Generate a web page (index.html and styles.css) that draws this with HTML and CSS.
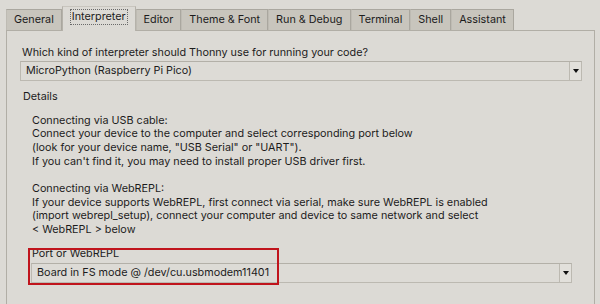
FILE: index.html
```html
<!DOCTYPE html>
<html lang="en">
<head>
    <meta charset="UTF-8">
    <title>Thonny options - Interpreter</title>
    <link rel="stylesheet" href="styles.css">
</head>
<body>
    <div class="tabs">
        <div class="tab">General</div>
        <div class="tab active"><span class="focus">Interpreter</span></div>
        <div class="tab">Editor</div>
        <div class="tab">Theme &amp; Font</div>
        <div class="tab">Run &amp; Debug</div>
        <div class="tab">Terminal</div>
        <div class="tab">Shell</div>
        <div class="tab">Assistant</div>
    </div>

    <div class="panel">
        <div class="question">Which kind of interpreter should Thonny use for running your code?</div>
        <div class="combo">
            <span class="combo-text">MicroPython (Raspberry Pi Pico)</span>
            <span class="combo-btn"><span class="arrow"></span></span>
        </div>

        <div class="details-title">Details</div>
        <div class="details">
            <p>Connecting via USB cable:<br>
            Connect your device to the computer and select corresponding port below<br>
            (look for your device name, "USB Serial" or "UART").<br>
            If you can't find it, you may need to install proper USB driver first.</p>
            <p>Connecting via WebREPL:<br>
            If your device supports WebREPL, first connect via serial, make sure WebREPL is enabled<br>
            (import webrepl_setup), connect your computer and device to same network and select<br>
            &lt; WebREPL &gt; below</p>
        </div>

        <div class="port">
            <div class="port-label">Port or WebREPL</div>
            <div class="combo">
                <span class="combo-text">Board in FS mode @ /dev/cu.usbmodem11401</span>
                <span class="combo-btn"><span class="arrow"></span></span>
            </div>
            <div class="highlight"></div>
        </div>
    </div>
</body>
</html>
```

FILE: styles.css
```css
body {
	margin: 0;
	padding: 0;
	background-color: #dcdad5;
	color: #1c1c1c;
	font-family: Inter, "Liberation Sans", Arial, sans-serif;
	font-size: 10.8px;
	height: 304px;
	overflow: hidden;
}

/* notebook tabs */
.tabs {
	display: flex;
	align-items: flex-end;
	padding: 6px 0 0 6px;
	height: 24px;
}

.tab {
	height: 20px;
	line-height: 20px;
	padding: 0 7px;
	border: 1px solid #aaa79f;
	border-bottom: none;
	border-left-color: #bebbb3;
	background-color: #c8c5bd;
	white-space: nowrap;
}

.tab.active {
	position: relative;
	z-index: 1;
	height: 24px;
	margin-bottom: -1px;
	padding: 0 8px;
	line-height: 20px;
	background-color: #dcdad5;
	border-color: #b5b2aa;
	border-top-color: #c8c5be;
}

.focus {
	display: inline-block;
	margin-top: 2px;
	line-height: 14px;
	padding: 0 1px;
	outline: 1px dotted #6a6a6a;
	outline-offset: 0;
}

/* content panel */
.panel {
	margin: 0 5px 0 6px;
	height: 290px;
	border: 1px solid #b1aea6;
	border-bottom: none;
	padding: 0 12px 0 13px;
	box-sizing: border-box;
}

.question {
	margin-top: 14px;
	padding-left: 2px;
	line-height: 16px;
}

.combo {
	display: flex;
	height: 20px;
	box-sizing: border-box;
	border: 1px solid #bcb9b1;
	border-top-color: #b3b0a8;
	background-color: #dddbd6;
}

.combo-text {
	flex: 1;
	padding-left: 5px;
	line-height: 18px;
	white-space: nowrap;
}

.combo-btn {
	display: flex;
	align-items: center;
	justify-content: center;
	width: 11px;
	border-left: 1px solid #bcb9b1;
	background-color: #e2e0db;
}

.arrow {
	width: 0;
	height: 0;
	border-left: 3px solid transparent;
	border-right: 3px solid transparent;
	border-top: 4px solid #111;
}

.details-title {
	margin-top: 9px;
	padding-left: 3px;
	line-height: 14px;
}

.details {
	margin-top: 9.5px;
	padding-left: 12px;
	line-height: 13.7px;
}

.details p {
	margin: 0 0 13.7px 0;
}

.details p:last-child {
	margin-bottom: 0;
}

.port {
	position: relative;
	margin-top: 10.5px;
	padding-left: 11px;
	margin-right: 10px;
}

.port-label {
	padding-left: 1px;
	line-height: 14px;
	margin-bottom: 2px;
}

/* red annotation box drawn over the port selector */
.highlight {
	position: absolute;
	left: 8px;
	top: 1px;
	width: 251px;
	height: 37px;
	box-sizing: border-box;
	border: 2px solid #c0141c;
	pointer-events: none;
}
```
